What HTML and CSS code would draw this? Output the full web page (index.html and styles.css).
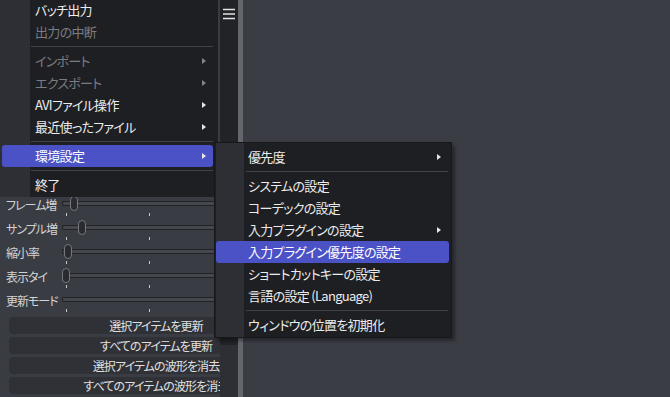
FILE: index.html
```html
<!DOCTYPE html>
<html lang="ja">
<head>
  <meta charset="UTF-8">
  <title>環境設定</title>
  <link rel="stylesheet" href="styles.css">
</head>
<body>

<div class="app">
  <div class="side">
    <div class="side-top"></div>

    <div class="slider-row">
      <div class="slider-label">フレーム増</div>
      <div class="slider">
        <div class="track"></div>
        <div class="thumb" style="left: 8px"></div>
        <div class="ticks"><span></span><span></span><span></span></div>
      </div>
    </div>
    <div class="slider-row">
      <div class="slider-label">サンプル増</div>
      <div class="slider">
        <div class="track"></div>
        <div class="thumb" style="left: 16px"></div>
        <div class="ticks"><span></span><span></span><span></span></div>
      </div>
    </div>
    <div class="slider-row">
      <div class="slider-label">縮小率</div>
      <div class="slider">
        <div class="track"></div>
        <div class="thumb" style="left: 2px"></div>
        <div class="ticks"><span></span><span></span><span></span></div>
      </div>
    </div>
    <div class="slider-row">
      <div class="slider-label">表示タイ</div>
      <div class="slider">
        <div class="track"></div>
        <div class="thumb" style="left: 0px"></div>
        <div class="ticks"><span></span><span></span><span></span></div>
      </div>
    </div>
    <div class="slider-row">
      <div class="slider-label">更新モード</div>
      <div class="slider">
        <div class="track"></div>
        <div class="ticks"><span></span><span></span><span></span></div>
      </div>
    </div>

    <div class="buttons">
      <button class="side-btn">選択アイテムを更新</button>
      <button class="side-btn">すべてのアイテムを更新</button>
      <button class="side-btn">選択アイテムの波形を消去</button>
      <button class="side-btn">すべてのアイテムの波形を消去</button>
    </div>
  </div>

  <div class="rail">
    <div class="rail-top">
      <svg class="rail-icon" width="12" height="12" viewBox="0 0 12 12">
        <path d="M0 1.5H12M0 6H12M0 10.5H12" stroke="#e4e4e4" stroke-width="1.3"/>
      </svg>
    </div>
  </div>
  <div class="splitter"></div>
  <div class="main"></div>
</div>

<div class="menu main-menu">
  <div class="menu-item">バッチ出力</div>
  <div class="menu-item disabled">出力の中断</div>
  <div class="menu-sep"></div>
  <div class="menu-item disabled">インポート<span class="arrow"></span></div>
  <div class="menu-item disabled">エクスポート<span class="arrow"></span></div>
  <div class="menu-item">AVIファイル操作<span class="arrow"></span></div>
  <div class="menu-item">最近使ったファイル<span class="arrow"></span></div>
  <div class="menu-sep"></div>
  <div class="menu-item active">環境設定<span class="arrow"></span></div>
  <div class="menu-sep"></div>
  <div class="menu-item">終了</div>
</div>

<div class="menu sub-menu">
  <div class="menu-item">優先度<span class="arrow"></span></div>
  <div class="menu-sep"></div>
  <div class="menu-item">システムの設定</div>
  <div class="menu-item">コーデックの設定</div>
  <div class="menu-item">入力プラグインの設定<span class="arrow"></span></div>
  <div class="menu-item active">入力プラグイン優先度の設定</div>
  <div class="menu-item">ショートカットキーの設定</div>
  <div class="menu-item">言語の設定 (Language)</div>
  <div class="menu-sep"></div>
  <div class="menu-item">ウィンドウの位置を初期化</div>
</div>

</body>
</html>
```

FILE: styles.css
```css
* {
  margin: 0;
  padding: 0;
  box-sizing: border-box;
}

body {
  font-family: "Noto Sans CJK JP", "Noto Sans", sans-serif;
  font-feature-settings: "palt";
  background-color: #3b3d45;
  width: 670px;
  height: 397px;
  overflow: hidden;
  position: relative;
}

.app {
  display: flex;
  height: 397px;
}

/* left panel */
.side {
  width: 220px;
  flex-shrink: 0;
  background-color: #3a3c43;
  overflow: hidden;
}

.side-top {
  height: 193px;
}

.slider-row {
  display: grid;
  grid-template-columns: 56px 1fr;
  height: 24px;
  padding-left: 6px;
}

.slider-label {
  font-size: 12px;
  line-height: 24px;
  letter-spacing: -1px;
  color: #d2d3d7;
  white-space: nowrap;
  overflow: hidden;
}

.slider {
  position: relative;
  padding-top: 8px;
}

.track {
  height: 5px;
  background-color: #45474e;
  border: 1px solid #222327;
  border-right: none;
  border-radius: 2px 0 0 2px;
}

.thumb {
  position: absolute;
  top: 3px;
  width: 8px;
  height: 15px;
  background-color: #2a2b30;
  border: 1px solid #76787d;
  border-radius: 4px;
}

.ticks {
  display: flex;
  gap: 82px;
  margin-top: 7px;
  padding-left: 4px;
}

.ticks span {
  width: 1px;
  height: 3px;
  background-color: #c6c6c6;
}

.buttons {
  display: flex;
  flex-direction: column;
  gap: 3px;
  padding: 4px 0 0 9px;
}

.side-btn {
  width: 294px;
  height: 17px;
  flex-shrink: 0;
  border: none;
  border-radius: 4px;
  background-color: #2f3137;
  color: #e0e0e0;
  font-family: inherit;
  font-feature-settings: "palt";
  font-size: 12px;
  letter-spacing: -0.9px;
  line-height: 17px;
}

/* toolbar rail + splitter */
.rail {
  width: 18px;
  flex-shrink: 0;
  display: flex;
  flex-direction: column;
  background-color: #2e2f34;
}

.rail-top {
  height: 345px;
  background-color: #222327;
  border-radius: 0 0 3px 3px;
  padding: 8px 0 0 3px;
}

.rail-icon {
  display: block;
}

.splitter {
  width: 5px;
  flex-shrink: 0;
  background-color: #65666b;
}

.main {
  flex: 1;
  background-color: #3b3d45;
}

/* popup menus */
.menu {
  position: absolute;
  font-size: 13px;
  letter-spacing: -0.7px;
  color: #ececec;
}

.menu-item {
  display: flex;
  align-items: center;
  justify-content: space-between;
  height: 22px;
  line-height: 22px;
  white-space: nowrap;
}

.menu-item.active {
  background-color: #4b52c6;
  border-radius: 3px;
  color: #fff;
}

.menu-item.disabled {
  color: #7b7c81;
}

.arrow {
  width: 0;
  height: 0;
  border-left: 4px solid #e6e6e6;
  border-top: 3.5px solid transparent;
  border-bottom: 3.5px solid transparent;
}

.disabled .arrow {
  border-left-color: #85868a;
}

.menu-sep {
  height: 1px;
  background-color: #424349;
}

.main-menu {
  left: 0;
  top: -4px;
  width: 218px;
  padding: 3px 0 1px;
  background: linear-gradient(to right, #2e2f34 30px, #1e1f23 30px);
}

.main-menu .menu-item {
  margin: 0 5px 0 2px;
  padding: 0 7px 0 33px;
}

.main-menu .menu-sep {
  margin: 3px 5px 3px 31px;
}

.sub-menu {
  left: 214px;
  top: 142px;
  width: 238px;
  padding: 3px 0 1px;
  border: 1px solid #18181b;
  background: linear-gradient(to right, #1e1f23 1px, #2e2f34 1px, #2e2f34 29px, #1e1f23 29px);
  box-shadow: 3px 3px 3px rgba(0, 0, 0, 0.35);
}

.sub-menu .menu-item {
  margin: 0 2px 0 1px;
  padding: 0 8px 0 32px;
}

.sub-menu .menu-sep {
  margin: 3px 3px 3px 31px;
}
```
